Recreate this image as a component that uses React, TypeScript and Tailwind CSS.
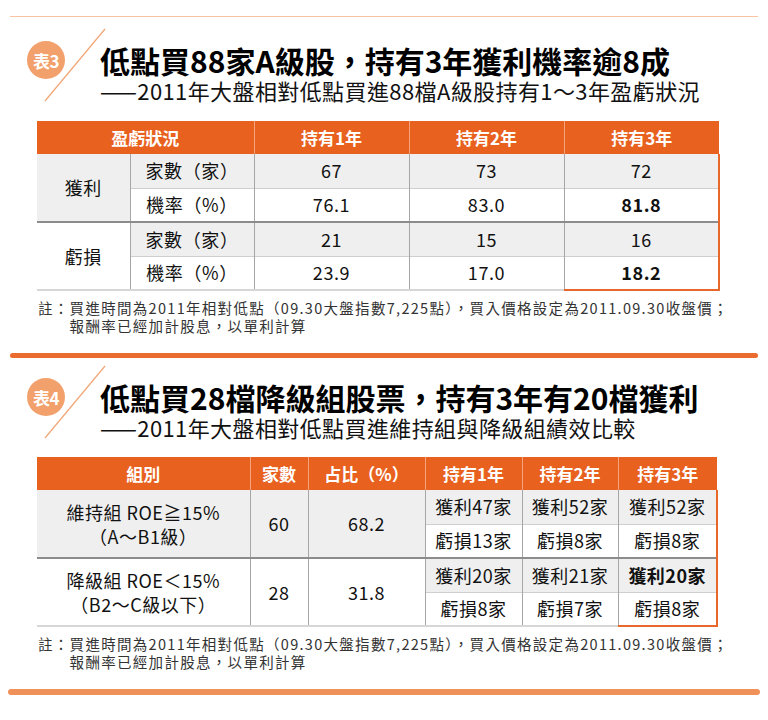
import React from 'react';

// colours picked off the reference
const HEAD_BG = 'bg-[#e8611f]';

function Badge({ label }: { label: string }) {
  return (
    <div className="flex h-[38px] w-[38px] items-center justify-center rounded-full bg-[#f2a06c] text-[17px] font-bold leading-none tracking-[-0.5px] text-white">
      {label}
    </div>
  );
}

function SectionHead({ badge, title, subtitle }: { badge: string; title: string; subtitle: string }) {
  return (
    <div className="relative flex h-[74px]">
      {/* the slash that runs behind the badge */}
      <svg className="absolute left-0 top-0" width="120" height="74">
        <line x1="105" y1="1" x2="45" y2="73" stroke="#f2a575" strokeWidth="1.2" />
      </svg>
      <div className="relative w-[100px] shrink-0 pl-[27px] pt-[13px]">
        <Badge label={badge} />
      </div>
      <div className="pt-[15px]">
        <h2 className="whitespace-nowrap text-[30px] font-bold leading-[34px] text-black">{title}</h2>
        <p className="mt-[1px] whitespace-nowrap text-[22px] leading-[24px] tracking-[0.4px] text-[#111]">{subtitle}</p>
      </div>
    </div>
  );
}

function Note() {
  return (
    <div className="ml-[38px] mt-[8px] flex text-[14.5px] leading-[18px] tracking-[1.3px] text-[#333]">
      <span className="shrink-0">註：</span>
      <div>
        <div className="whitespace-nowrap">買進時間為2011年相對低點（09.30大盤指數7,225點），買入價格設定為2011.09.30收盤價；</div>
        <div>報酬率已經加計股息，以單利計算</div>
      </div>
    </div>
  );
}

const th = `${HEAD_BG} h-[33px] p-0 text-center text-[17px] font-bold tracking-normal text-white`;
const sep = 'border-l border-l-[#f3a47c]';
const td = 'p-0 text-center border-l border-l-[#a6a6a6]';
const thin = 'border-t border-t-[#cfcfcf]';
const thick = 'border-t-2 border-t-[#8c8c8c]';
const box = 'border-x-2 border-x-[#e8672a]';
const boxEnd = 'border-b-2 border-b-[#e8672a]';
const gray = 'bg-[#efefef]';

function TableOne() {
  return (
    <table className="ml-[37px] mt-[19px] w-[682px] table-fixed border-collapse text-[18px] tracking-[0.6px] text-[#111]">
      <colgroup>
        <col className="w-[93px]" />
        <col className="w-[124px]" />
        <col className="w-[155px]" />
        <col className="w-[155px]" />
        <col className="w-[155px]" />
      </colgroup>
      <thead>
        <tr>
          <th colSpan={2} className={th}>盈虧狀況</th>
          <th className={`${th} ${sep}`}>持有1年</th>
          <th className={`${th} ${sep}`}>持有2年</th>
          <th className={`${th} ${sep}`}>持有3年</th>
        </tr>
      </thead>
      <tbody>
        <tr className="h-[34px]">
          <td rowSpan={2} className={`p-0 text-center ${gray}`}>獲利</td>
          <td className={`${td} ${gray}`}>家數（家）</td>
          <td className={`${td} ${gray}`}>67</td>
          <td className={`${td} ${gray}`}>73</td>
          <td className={`${td} ${gray} ${box}`}>72</td>
        </tr>
        <tr className="h-[34px]">
          <td className={`${td} ${thin}`}>機率（%）</td>
          <td className={`${td} ${thin}`}>76.1</td>
          <td className={`${td} ${thin}`}>83.0</td>
          <td className={`${td} ${thin} ${box} font-bold`}>81.8</td>
        </tr>
        <tr className="h-[34px]">
          <td rowSpan={2} className={`p-0 text-center ${thick}`}>虧損</td>
          <td className={`${td} ${thick} ${gray}`}>家數（家）</td>
          <td className={`${td} ${thick} ${gray}`}>21</td>
          <td className={`${td} ${thick} ${gray}`}>15</td>
          <td className={`${td} ${thick} ${gray} ${box}`}>16</td>
        </tr>
        <tr className="h-[34px] border-b-2 border-b-[#d6d6d6]">
          <td className={`${td} ${thin}`}>機率（%）</td>
          <td className={`${td} ${thin}`}>23.9</td>
          <td className={`${td} ${thin}`}>17.0</td>
          <td className={`${td} ${thin} ${box} ${boxEnd} font-bold`}>18.2</td>
        </tr>
      </tbody>
    </table>
  );
}

const groups = [
  {
    name: ['維持組 ROE≧15%', '（A～B1級）'],
    count: '60',
    share: '68.2',
    win: ['獲利47家', '獲利52家', '獲利52家'],
    loss: ['虧損13家', '虧損8家', '虧損8家'],
    bg: gray,
    boldWin: false,
  },
  {
    name: ['降級組 ROE＜15%', '（B2～C級以下）'],
    count: '28',
    share: '31.8',
    win: ['獲利20家', '獲利21家', '獲利20家'],
    loss: ['虧損8家', '虧損7家', '虧損8家'],
    bg: '',
    boldWin: true,
  },
];

function TableTwo() {
  return (
    <table className="ml-[37px] mt-[18px] w-[680px] table-fixed border-collapse text-[18px] tracking-[0.5px] text-[#111]">
      <colgroup>
        <col className="w-[213px]" />
        <col className="w-[58px]" />
        <col className="w-[117px]" />
        <col className="w-[97px]" />
        <col className="w-[96px]" />
        <col className="w-[99px]" />
      </colgroup>
      <thead>
        <tr>
          <th className={th}>組別</th>
          <th className={`${th} ${sep}`}>家數</th>
          <th className={`${th} ${sep}`}>占比（%）</th>
          <th className={`${th} ${sep}`}>持有1年</th>
          <th className={`${th} ${sep}`}>持有2年</th>
          <th className={`${th} ${sep}`}>持有3年</th>
        </tr>
      </thead>
      <tbody>
        {groups.map((g, gi) => {
          const top = gi === 0 ? '' : thick;
          const last = gi === groups.length - 1;
          return (
            <React.Fragment key={gi}>
              <tr className="h-[34px]">
                <td rowSpan={2} className={`p-0 text-center leading-[24px] ${top} ${g.bg}`}>
                  <div>{g.name[0]}</div>
                  <div>{g.name[1]}</div>
                </td>
                <td rowSpan={2} className={`${td} ${top} ${g.bg}`}>{g.count}</td>
                <td rowSpan={2} className={`${td} ${top} ${g.bg}`}>{g.share}</td>
                {g.win.map((w, i) => (
                  <td
                    key={i}
                    className={`${td} ${top} ${gray} whitespace-nowrap ${i === 2 ? box : ''} ${i === 2 && g.boldWin ? 'font-bold' : ''}`}
                  >
                    {w}
                  </td>
                ))}
              </tr>
              <tr className={`h-[34px] ${last ? 'border-b-2 border-b-[#d6d6d6]' : ''}`}>
                {g.loss.map((l, i) => (
                  <td key={i} className={`${td} ${thin} whitespace-nowrap ${i === 2 ? box : ''} ${i === 2 && last ? boxEnd : ''}`}>
                    {l}
                  </td>
                ))}
              </tr>
            </React.Fragment>
          );
        })}
      </tbody>
    </table>
  );
}

export default function App() {
  return (
    <div className="h-[720px] w-[768px] bg-white font-['Noto_Sans_CJK_TC',sans-serif]">
      <div className="h-[16px]" />
      <div className="mx-[10px] h-px bg-[#f8c3a3]" />
      <div className="mt-[11px]">
        <SectionHead
          badge="表3"
          title="低點買88家A級股，持有3年獲利機率逾8成"
          subtitle="——2011年大盤相對低點買進88檔A級股持有1～3年盈虧狀況"
        />
      </div>
      <TableOne />
      <Note />
      <div className="mx-[10px] mt-[18px] h-[5px] rounded-full bg-[#e96b2d]" />
      <div className="mt-[7px]">
        <SectionHead
          badge="表4"
          title="低點買28檔降級組股票，持有3年有20檔獲利"
          subtitle="——2011年大盤相對低點買進維持組與降級組績效比較"
        />
      </div>
      <TableTwo />
      <Note />
      <div className="mx-[8px] mt-[18px] h-[6px] rounded-full bg-[#f0915a]" />
    </div>
  );
}
